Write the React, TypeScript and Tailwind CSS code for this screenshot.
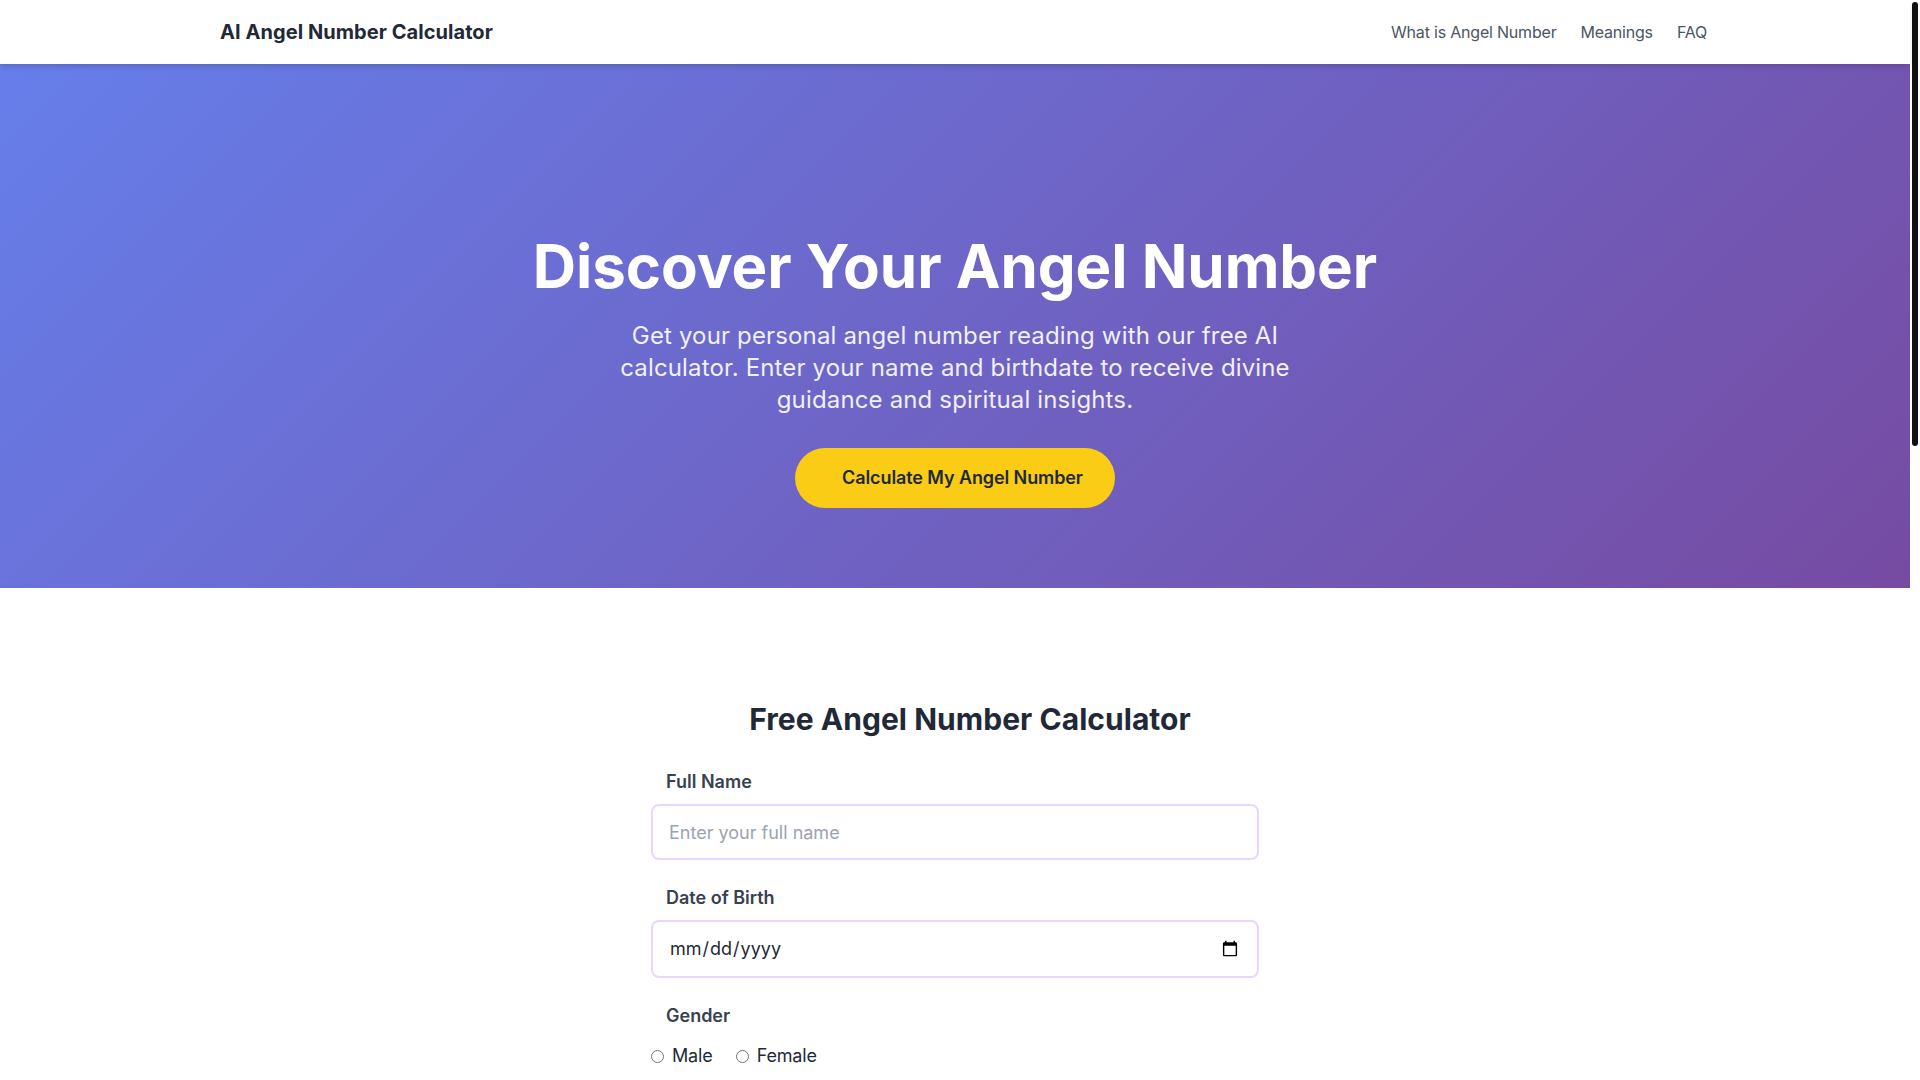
function Label({ children }: { children: string }) {
  return <label className="mb-2 block px-[15px] text-lg font-semibold leading-7 text-[#374151]">{children}</label>;
}

export default function App() {
  return (
    <div className="flex h-screen overflow-hidden bg-white font-['Inter',sans-serif] text-[#1f2937]">
      <main className="h-full w-[1910px] shrink-0">
        <header className="relative z-10 h-16 bg-white shadow-md">
          <div className="mx-auto flex h-full max-w-[1536px] items-center justify-between pl-[33px] pr-4">
            <span className="text-xl font-bold tracking-[0.06px]">AI Angel Number Calculator</span>
            <nav className="flex gap-6 text-base tracking-[-0.2px] text-[#4b5563]">
              <a>What is Angel Number</a>
              <a>Meanings</a>
              <a>FAQ</a>
            </nav>
          </div>
        </header>

        <section className="flex h-[524px] flex-col items-center bg-[linear-gradient(135deg,#667eea_0%,#764ba2_100%)] pt-[172px] text-center text-white">
          <h1 className="text-6xl font-bold leading-[60px] tracking-[-0.05px]">Discover Your Angel Number</h1>
          <p className="mt-6 w-[680px] text-2xl leading-8 tracking-[0.15px] opacity-90">
            Get your personal angel number reading with our free AI calculator. Enter your name and birthdate to receive
            divine guidance and spiritual insights.
          </p>
          <button className="mt-8 h-[60px] rounded-full bg-[#facc15] pl-[47px] pr-8 text-lg font-semibold tracking-[-0.1px] text-[#1f2937]">
            Calculate My Angel Number
          </button>
        </section>

        <section className="pt-[113px]">
          <div className="mx-auto w-[608px]">
            <h2 className="relative left-[15px] mb-[31px] whitespace-nowrap text-center text-3xl font-bold tracking-[0.04px]">Free Angel Number Calculator</h2>
            <Label>Full Name</Label>
            <input
              placeholder="Enter your full name"
              className="mb-6 h-14 w-full rounded-lg border-2 border-[#e9d5ff] px-4 text-lg placeholder:text-[#9ca3af]"
            />
            <Label>Date of Birth</Label>
            <input type="date" className="mb-6 h-[58px] w-full rounded-lg border-2 border-[#e9d5ff] px-4 text-lg" />
            <Label>Gender</Label>
            <div className="mt-3 flex gap-[23px] text-lg tracking-[-0.15px]">
              <label className="flex items-center gap-2"><input type="radio" name="gender" />Male</label>
              <label className="flex items-center gap-2"><input type="radio" name="gender" />Female</label>
            </div>
          </div>
        </section>
      </main>
      <aside className="h-full w-[10px] shrink-0 pl-[2px] pt-[2px]">
        <div className="h-[444px] w-[6px] rounded-[3px] bg-[#111111]" />
      </aside>
    </div>
  );
}
